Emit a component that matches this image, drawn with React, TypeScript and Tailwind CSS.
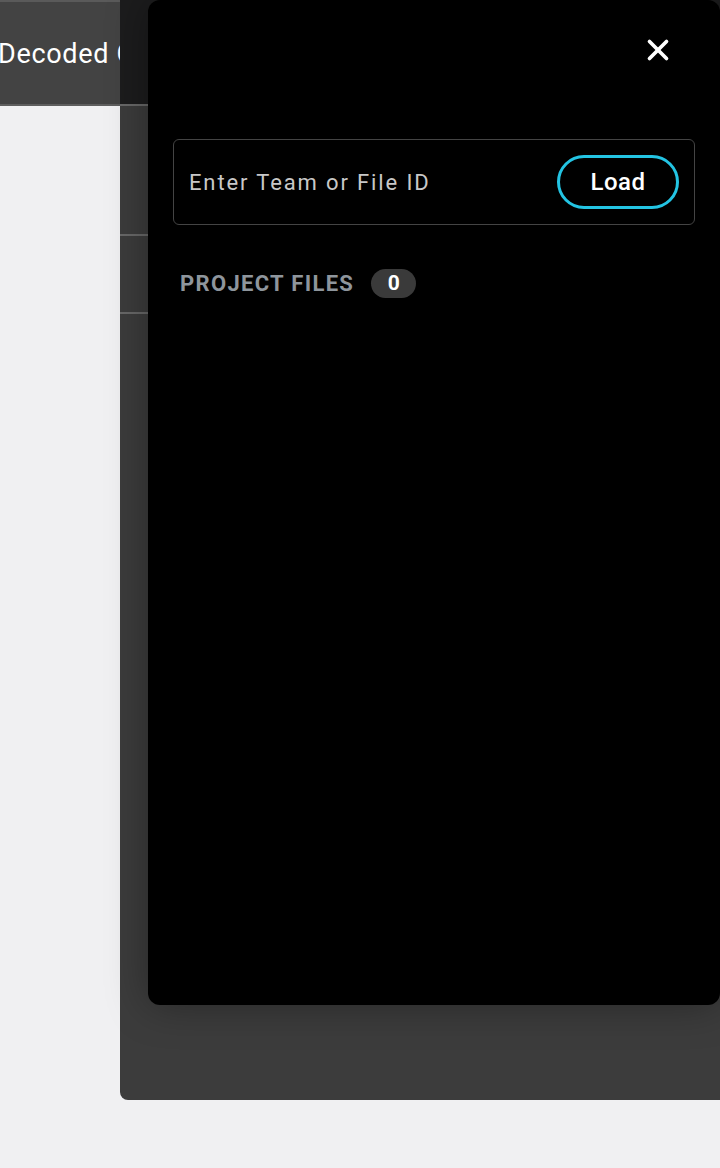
import { X } from "lucide-react";

export default function App() {
  return (
    <div className="relative w-[720px] h-[1168px] overflow-hidden bg-[#f0f0f2] font-['Roboto',sans-serif]">
      {/* page header behind the sheets */}
      <header className="h-[106px] bg-[#434343] border-t-2 border-t-[#5a5a5a] border-b-2 border-b-[#5e5e5e] flex items-center pt-[3px] overflow-hidden">
        <span className="-ml-[2px] text-[27px] text-white whitespace-nowrap tracking-[0.025em]">Decoded Output</span>
      </header>

      {/* underlying sheet */}
      <div className="absolute left-[120px] top-0 right-0 h-[1100px] bg-[#3c3c3c] rounded-bl-lg overflow-hidden">
        <div className="h-[106px] bg-[#1c1c1d] border-b-2 border-[#686868]" />
        <div className="h-[130px] border-b-2 border-[#686868]" />
        <div className="h-[78px] border-b-2 border-[#686868]" />
      </div>

      {/* files drawer */}
      <aside className="absolute left-[148px] top-0 right-0 h-[1005px] bg-black rounded-xl shadow-[0_0_40px_rgba(0,0,0,0.35)] px-[25px]">
        <div className="h-[139px] flex items-start justify-end pt-[26px] pr-[13px]">
          <button className="w-12 h-12 flex items-center justify-center text-white">
            <X size={34} strokeWidth={2.6} />
          </button>
        </div>

        <div className="h-[86px] rounded-md border-[1.5px] border-[#444444] flex items-center justify-between pl-[15px] pr-[15px]">
          <span className="text-[22px] text-[#c8c8c8] tracking-[0.085em]">Enter Team or File ID</span>
          <button className="w-[122px] h-[54px] rounded-full border-[3px] border-[#23c4e3] text-white text-[24px] font-medium tracking-[0.02em]">
            Load
          </button>
        </div>

        <div className="mt-[42px] pl-[7px] flex items-center gap-[17px]">
          <span className="text-[22px] font-bold uppercase text-[#8e959c] tracking-[0.06em]">Project Files</span>
          <span className="h-[29px] min-w-[45px] px-3 rounded-full bg-[#3a3a3a] text-white text-[21px] font-bold flex items-center justify-center">
            0
          </span>
        </div>
      </aside>
    </div>
  );
}
